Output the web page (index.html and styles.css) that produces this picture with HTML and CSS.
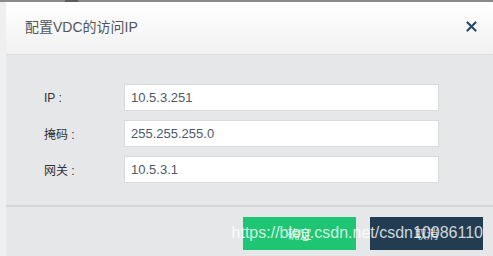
FILE: index.html
```html
<!DOCTYPE html>
<html lang="zh-CN">
<head>
    <meta charset="UTF-8">
    <meta name="viewport" content="width=device-width, initial-scale=1.0">
    <title>配置VDC的访问IP</title>
    <link rel="stylesheet" href="styles.css">
</head>
<body>
    <div class="topline"><span class="tab-mark"></span></div>
    <div class="dialog">
        <div class="dialog-header">
            <span class="dialog-title">配置VDC的访问IP</span>
            <span class="close-btn">
                <svg width="11" height="11" viewBox="0 0 11 11">
                    <path d="M1.5 1.5 L9.5 9.5 M9.5 1.5 L1.5 9.5" stroke="#2b4a63" stroke-width="2.2" stroke-linecap="round"/>
                </svg>
            </span>
        </div>
        <div class="dialog-body">
            <div class="form-row">
                <label class="form-label">IP :</label>
                <div class="form-input">10.5.3.251</div>
            </div>
            <div class="form-row">
                <label class="form-label">掩码 :</label>
                <div class="form-input">255.255.255.0</div>
            </div>
            <div class="form-row">
                <label class="form-label">网关 :</label>
                <div class="form-input">10.5.3.1</div>
            </div>
        </div>
        <div class="dialog-footer">
            <button class="btn btn-ok">确定</button>
            <button class="btn btn-cancel">取消</button>
            <span class="watermark">https://blog.csdn.net/csdn10086110</span>
        </div>
    </div>
</body>
</html>
```

FILE: styles.css
```css
body {
    margin: 0;
    width: 493px;
    height: 256px;
    overflow: hidden;
    background: #efefef;
    font-family: "Liberation Sans", "Noto Sans CJK SC", sans-serif;
}
.topline {
    height: 2px;
    background: #8a8a8a;
    padding-left: 65px;
}
.tab-mark {
    display: block;
    width: 13px;
    height: 2px;
    background: #5d5d5d;
}
.dialog {
    margin-left: 6px;
    height: 254px;
    display: flex;
    flex-direction: column;
    background: #e6e7e9;
}
.dialog-header {
    height: 53px;
    box-sizing: border-box;
    display: flex;
    align-items: center;
    justify-content: space-between;
    padding: 0 16px 4px 19px;
    background: linear-gradient(#ffffff, #f1f1f2);
    border-bottom: 1px solid #dcdddf;
}
.dialog-title {
    font-size: 14px;
    color: #555;
}
.close-btn {
    display: flex;
}
.dialog-body {
    height: 152px;
    box-sizing: border-box;
    padding: 29px 0 0 38px;
    display: flex;
    flex-direction: column;
    gap: 9px;
    border-bottom: 2px solid #d5d6d8;
}
.form-row {
    display: flex;
    align-items: center;
}
.form-label {
    width: 80px;
    font-size: 12px;
    color: #333;
}
.form-input {
    width: 315px;
    height: 27px;
    box-sizing: border-box;
    padding: 0 6px;
    display: flex;
    align-items: center;
    background: #fff;
    border: 1px solid #dadbdd;
    font-size: 13px;
    color: #4b5a6a;
}
.dialog-footer {
    position: relative;
    flex: 1;
    display: flex;
    justify-content: flex-end;
    align-items: flex-start;
    gap: 14px;
    padding: 10px 10px 0 0;
}
.btn {
    width: 113px;
    height: 33px;
    border: none;
    font-family: "Liberation Sans", "Noto Sans CJK SC", sans-serif;
    font-size: 12px;
    color: rgba(255, 255, 255, 0.8);
}
.btn-ok {
    background: #1ec573;
}
.btn-cancel {
    background: #223d52;
}
.watermark {
    position: absolute;
    right: 10px;
    top: 17px;
    font-size: 16px;
    color: rgba(255, 255, 255, 0.8);
    pointer-events: none;
}
```
